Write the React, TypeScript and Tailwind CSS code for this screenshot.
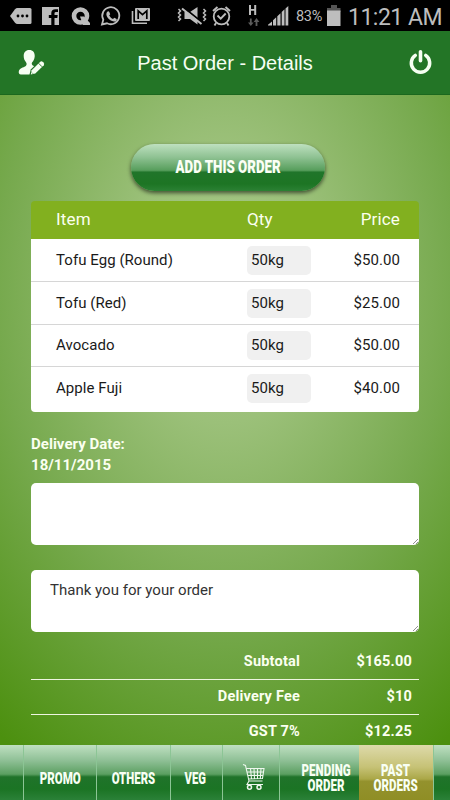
import type { ReactNode } from 'react';
import { clsx } from 'clsx';

type OrderItem = { name: string; qty: string; price: string };

const items: OrderItem[] = [
  { name: 'Tofu Egg (Round)', qty: '50kg', price: '$50.00' },
  { name: 'Tofu (Red)', qty: '50kg', price: '$25.00' },
  { name: 'Avocado', qty: '50kg', price: '$50.00' },
  { name: 'Apple Fuji', qty: '50kg', price: '$40.00' },
];

const totals = [
  { label: 'Subtotal', value: '$165.00' },
  { label: 'Delivery Fee', value: '$10' },
  { label: 'GST 7%', value: '$12.25' },
];

function StatusBar() {
  return (
    <div className="flex h-[31px] shrink-0 bg-black text-[#bdbdbd]">
      <svg className="shrink-0" width="296" height="31" viewBox="0 0 296 31" fill="currentColor">
        {/* more notifications */}
        <path d="M10 16 15 9.2Q16 8 17.500 8H30Q31.500 8 31.500 9.500V22.500Q31.500 24 30 24H17.500Q16 24 15 22.800Z" />
        <g fill="#000">
          <circle cx="18" cy="16" r="1.400" />
          <circle cx="22.500" cy="16" r="1.400" />
          <circle cx="27" cy="16" r="1.400" />
        </g>
        {/* facebook */}
        <path d="M42 7H59V25H54.500V18H57.300L57.700 15H54.500V13.200Q54.500 12 56 12H58V9.200H55.500Q51.300 9.200 51.300 13V15H48.800V18H51.300V25H42Z" />
        {/* Q */}
        <circle cx="80.500" cy="16" r="6.500" fill="none" stroke="currentColor" strokeWidth="4.600" />
        <path d="M80 16.500h4l6 6.500v2h-7Z" />
        {/* whatsapp */}
        <path d="m102 24.500 1.300-4.800A8.500 8.500 0 1 1 107 23.300Z" fill="none" stroke="currentColor" strokeWidth="1.800" />
        <path d="M107 12Q108.500 10.500 109.300 12L110.200 14.200 109.200 15.500Q110.500 18 113 19L114.300 17.700 116.700 18.900Q117 21.500 114 21.500 110 21 107.500 17.500 105.500 14.500 107 12Z" />
        {/* mail */}
        <path d="M132.500 11V23.300H147" fill="none" stroke="currentColor" strokeWidth="1.600" />
        <rect x="135" y="8" width="15" height="13" rx="1" />
        <path d="M138.200 19V10.800L142.500 14.600 146.800 10.800V19" fill="none" stroke="#000" strokeWidth="1.700" />
        {/* vibrate, muted */}
        <path d="M184.500 12h5.500L197.500 7v17.500l-7.500-5.500h-5.500Z" />
        <path d="m183.500 7.500 20 16" stroke="#000" strokeWidth="2" />
        <path d="m182 8.500 19.500 15.500" stroke="currentColor" strokeWidth="2" />
        <path d="m178.500 9 2 2-2 2 2 2-2 2 2 2-2 2M203.500 9l2 2-2 2 2 2-2 2 2 2-2 2" fill="none" stroke="currentColor" strokeWidth="1.500" />
        {/* alarm */}
        <circle cx="221.500" cy="16.500" r="7.800" fill="none" stroke="currentColor" strokeWidth="1.800" />
        <path d="m213 11 4.500-4M225.500 7l4.500 4M216 23l-1.500 2.500M227 23l1.500 2.500M217.500 15.500l3.200 3.200 5-5.200" fill="none" stroke="currentColor" strokeWidth="1.900" />
        {/* H network */}
        <path d="M249 5h2v4h3.200V5h2v10h-2v-4.200H251V15h-2Z" />
        <path d="M248 22.500h1.900V18.500h1.800v4h1.900L250.800 26ZM253.700 22 256.500 18l2.900 4h-2v4h-1.800v-4Z" fill="#5c5c5c" />
        {/* signal bars */}
        <path d="M268 25.500v-.700l4-3.300v4ZM273 25.500v-5.300l3.200-3v8.300ZM277.300 25.500v-9.300l3.200-3v12.300ZM281.700 25.500V11.900l2.800-2.700v16.300ZM285.500 25.500V8.500l2.800-2.500v19.500Z" />
      </svg>
      <div className="flex w-[30px] shrink-0 items-center pt-[2px] text-[14.500px] tracking-[-0.300px]">83%</div>
      <svg className="shrink-0" width="16" height="31" viewBox="0 0 16 31">
        <path d="M5 5h6v3h3.500v4H1V8h4Z" fill="#555" />
        <path d="M1 10.500h13.500V26H1Z" fill="#bdbdbd" />
      </svg>
      <div className="flex flex-1 items-center pt-[3px] pl-[6px] text-[23px] leading-none tracking-[-0.500px] whitespace-nowrap">
        11:21 AM
      </div>
    </div>
  );
}

function Header() {
  return (
    <header className="flex h-16 shrink-0 items-center justify-between border-b border-[#1b681e] bg-[#237526] pr-[17px] pl-[18px] text-[#f6fff2]">
      <svg width="28" height="28" viewBox="0 0 28 28" fill="currentColor">
        <path d="M11.200 1C15 1 17 3.700 16.700 7.500 16.500 10 15.500 12 14.200 13.300 13.500 14.300 13.700 15.500 14.500 16.200L18.500 18.500 12.500 25.500H3C1 25.500.5 24 .8 22.500 1.300 19.500 4 18.800 6.500 17.700 8.700 16.800 9.200 14.800 8 13.200 6.500 11.500 5.700 9.500 5.700 7 5.700 3.500 7.700 1 11.200 1Z" />
        {/* pencil, cut out of the shoulder */}
        <path d="M22.500 11 27 15.500 17.300 25.200 11.300 26.500 12.700 20.500Z" fill="#237526" />
        <path d="M22.300 12.700Q23.500 11.700 25.200 13.300 26.900 15 25.800 16.200L17.300 24.600 12.800 25.500 13.700 21.200Z" />
        <path d="m20.500 14.200 3.600 3.600M14 23.700l.9.900" fill="none" stroke="#237526" strokeWidth=".9" />
      </svg>
      <h1 className="pr-[5px] font-['Liberation_Sans',sans-serif] text-[20px] leading-6">Past Order - Details</h1>
      <svg width="24" height="26" viewBox="0 0 24 26" fill="none" stroke="currentColor" strokeLinecap="round">
        <path d="M6.300 5.400A9.200 9.200 0 1 0 16.700 5.400" strokeWidth="3.500" />
        <path d="M11.500 1.800v9" strokeWidth="3.600" />
      </svg>
    </header>
  );
}

// Condensed heading lettering used by the button and the tab bar
function Condensed({ children, className }: { children: ReactNode; className?: string }) {
  return <span className={clsx('block text-center font-black whitespace-nowrap', className)}>{children}</span>;
}

function ItemTable() {
  return (
    <div className="overflow-hidden rounded-[4px]">
      <div className="grid h-[38px] grid-cols-[216px_90px_1fr] items-center bg-[#82b01f] pr-[19px] text-[17px] tracking-[0.150px] text-[#fbffef]">
        <div className="pl-[25px]">Item</div>
        <div>Qty</div>
        <div className="text-right">Price</div>
      </div>
      {items.map((item, i) => (
        <div
          key={item.name}
          className={clsx(
            'grid grid-cols-[216px_90px_1fr] items-start bg-white pr-[19px] text-[15px] leading-7 tracking-[0.050px] text-[#1a1a1a]',
            i < 2 && 'h-[43px] border-b border-[#d6d6d6] pt-[7px]',
            i === 2 && 'h-[42px] border-b border-[#d6d6d6] pt-[6px]',
            i === 3 && 'h-[45px] pt-[6.500px]'
          )}
        >
          <div className="pl-[25px]">{item.name}</div>
          <div className="h-[29px] w-16 rounded-[5px] bg-[#f0f0f0] pl-[4px]">{item.qty}</div>
          <div className="text-right">{item.price}</div>
        </div>
      ))}
    </div>
  );
}

function NoteBox({ text }: { text?: string }) {
  return (
    <div className="flex h-[62px] items-end justify-between rounded-[5px] bg-white">
      <p className="self-start pt-[9px] pl-[19px] text-[15px] leading-[22px] tracking-[0.020px] text-[#333]">{text}</p>
      <svg width="7" height="7" viewBox="0 0 7 7" stroke="#777" strokeWidth=".8">
        <path d="M1 6 6 1M4 6l2-2" />
      </svg>
    </div>
  );
}

function CartIcon() {
  return (
    <svg width="24" height="28" viewBox="0 0 24 28" fill="none" stroke="#eef7ee" strokeWidth="1.100">
      <path d="M1 1.500 3.500 2.500 7 18h13.500M4.500 5.500H22L20.500 15.500 6.700 16M8.500 5.500l1 10.500M12 5.500l.5 10.500M15.500 5.500v10M19 5.500l-.7 10M5 9h16.500M5.800 12.500h15.500M7 18 5 21.500h16" />
      <circle cx="7.500" cy="24.200" r="2" strokeWidth="1.500" />
      <circle cx="17" cy="24.200" r="2" strokeWidth="1.500" />
    </svg>
  );
}

function TabBar() {
  const tab = 'flex flex-col items-center justify-center border-r border-[#8cc595]';
  const label = 'text-[17px] leading-[15px]';
  return (
    <nav className="grid h-[55px] shrink-0 grid-cols-[24px_73px_74px_52px_57px_79px_74px_17px] bg-[linear-gradient(to_bottom,#bfe0c1_0%,#8fc096_28%,#5b9f61_53%,#20732a_58%,#1b7424_80%,#2b8138_100%)] text-[#f8fff4]">
      <div className={tab} />
      <div className={clsx(tab, 'pt-[11px]')}>
        <Condensed className={clsx(label, 'scale-x-[0.680]')}>PROMO</Condensed>
      </div>
      <div className={clsx(tab, 'pt-[11px]')}>
        <Condensed className={clsx(label, 'scale-x-[0.670]')}>OTHERS</Condensed>
      </div>
      <div className={clsx(tab, 'pt-[11px] pr-[2px]')}>
        <Condensed className={clsx(label, 'scale-x-[0.660]')}>VEG</Condensed>
      </div>
      <div className={clsx(tab, 'pt-[9px] pl-[5px]')}>
        <CartIcon />
      </div>
      <div className="flex flex-col items-center justify-center pt-[11px] pl-[13px]">
        <Condensed className={clsx(label, 'scale-x-[0.680]')}>
          PENDING
          <br />
          ORDER
        </Condensed>
      </div>
      <div className="flex flex-col items-center justify-center bg-[linear-gradient(to_bottom,#dedaab_0%,#c6c276_40%,#aaa747_62%,#94922d_66%,#8f8e25_100%)] pt-[11px]">
        <Condensed className={clsx(label, 'scale-x-[0.680]')}>
          PAST
          <br />
          ORDERS
        </Condensed>
      </div>
      <div className="border-l border-[#8cc595]" />
    </nav>
  );
}

export default function App() {
  return (
    <div className="flex h-[800px] w-[450px] flex-col overflow-hidden font-[Roboto,sans-serif]">
      <StatusBar />
      <Header />

      <main className="flex min-h-0 flex-1 flex-col overflow-hidden bg-[radial-gradient(ellipse_380px_560px_at_50%_29%,#a6c987_0%,#9bc079_25%,#76a94d_60%,#4c900f_100%)] px-[31px] pt-[49px]">
        <button className="ml-[100px] flex h-[47px] w-[194px] shrink-0 items-center justify-center rounded-full bg-[linear-gradient(to_bottom,#bee0bf_0%,#8fc293_28%,#579e5c_56%,#20752a_60%,#1d7524_85%,#2b8134_100%)] text-[#fbfff6] shadow-[0_2px_4px_rgba(0,0,0,0.600)]">
          <Condensed className="scale-x-[0.700] text-[19px]">ADD THIS ORDER</Condensed>
        </button>

        <div className="mt-[10px] shrink-0">
          <ItemTable />
        </div>

        <div className="mt-[22px] mb-[7px] text-[15px] leading-[21px] font-bold tracking-[0.020px] text-[#fbfff0]">
          <div>Delivery Date:</div>
          <div>18/11/2015</div>
        </div>

        <div className="flex shrink-0 flex-col gap-[25px]">
          <NoteBox />
          <NoteBox text="Thank you for your order" />
        </div>

        <div className="mt-[13px] shrink-0 text-[14.500px] font-bold tracking-[0.200px] text-[#fbfff0]">
          {totals.map((row, i) => (
            <div
              key={row.label}
              className={clsx(
                'grid grid-cols-[269px_1fr] items-center pr-[7px] text-right',
                i < 2 ? 'h-[35px] border-b border-[#eef5e0]' : 'h-[33px]'
              )}
            >
              <div>{row.label}</div>
              <div>{row.value}</div>
            </div>
          ))}
        </div>
      </main>

      <TabBar />
    </div>
  );
}
